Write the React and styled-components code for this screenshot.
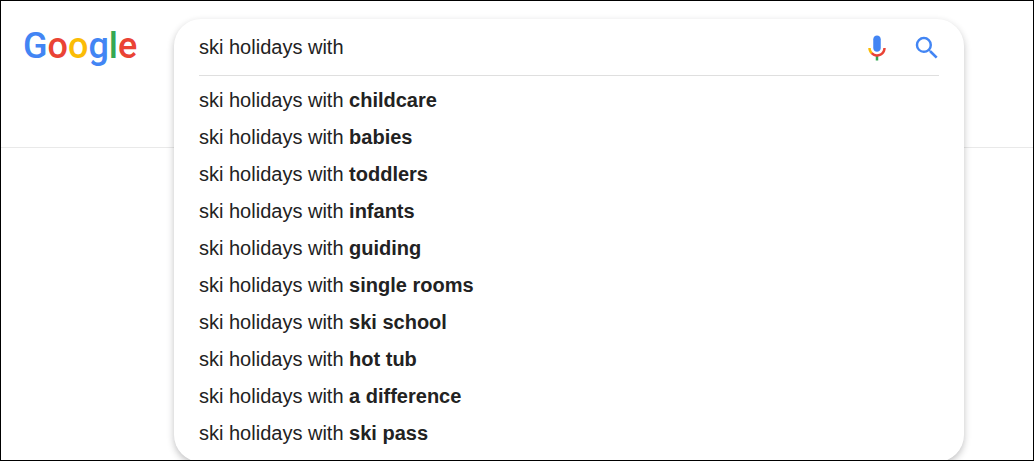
import { useState } from "react"
import styled, { createGlobalStyle } from "styled-components"

const GlobalStyle = createGlobalStyle`
  *, *::before, *::after {
    box-sizing: border-box;
  }

  body {
    margin: 0;
    background: #fff;
    color: #222;
    font-family: "Liberation Sans", Arial, sans-serif;
    font-size: 20px;
  }
`

const Page = styled.div`
  position: relative;
  min-height: 100vh;
  overflow: hidden;
  border: 1px solid #000;
`

const Header = styled.header`
  position: relative;
  height: 147px;
  padding: 23px 22px;
  border-bottom: 1px solid #e9e9e9;
`

const Logo = styled.a`
  display: inline-block;
  font-family: Roboto, sans-serif;
  font-size: 36px;
  font-weight: 500;
  line-height: 44px;
  text-decoration: none;
`

const Letter = styled.span`
  color: ${({ $color }) => $color};
`

// floats over the header line and the results below it
const SearchBox = styled.form`
  position: absolute;
  top: 18px;
  left: 173px;
  right: 69px;
  padding: 0 25px 10px;
  border-radius: 27px;
  background: #fff;
  box-shadow: 0 3px 7px rgba(32, 33, 36, 0.28);
`

const SearchRow = styled.div`
  display: flex;
  align-items: center;
  gap: 20px;
  height: 57px;
  border-bottom: 1px solid #dfdfdf;
`

const SearchInput = styled.input`
  flex: 1;
  min-width: 0;
  padding: 0;
  border: 0;
  outline: 0;
  background: transparent;
  color: #222;
  font: inherit;
`

const IconButton = styled.button`
  display: flex;
  padding: 1px 0 0;
  border: 0;
  background: none;
  cursor: pointer;

  &:last-child {
    margin-right: -3px;
  }

  svg {
    width: 30px;
    height: 30px;
  }
`

const Suggestions = styled.ul`
  margin: 0;
  padding: 6px 0 0;
  list-style: none;
`

const Suggestion = styled.a`
  display: block;
  color: #222;
  line-height: 37px;
  text-decoration: none;
`

const logoLetters = [
  ["G", "#4285f4"],
  ["o", "#ea4335"],
  ["o", "#fbbc05"],
  ["g", "#4285f4"],
  ["l", "#34a853"],
  ["e", "#ea4335"],
]

const prefix = "ski holidays with"

const endings = [
  "childcare",
  "babies",
  "toddlers",
  "infants",
  "guiding",
  "single rooms",
  "ski school",
  "hot tub",
  "a difference",
  "ski pass",
]

function MicIcon() {
  return (
    <svg viewBox="0 0 24 24" aria-hidden="true">
      <path
        fill="#4285f4"
        d="M12 15c1.66 0 3-1.31 3-2.97V5.01C15 3.35 13.66 2 12 2S9 3.34 9 5.01v7.02C9 13.69 10.34 15 12 15z"
      />
      <path fill="#34a853" d="M11 18.08h2V22h-2z" />
      <path fill="#fbbc05" d="M7.05 16.87C5.78 15.54 5 14.04 5 12h2c0 1.45.56 2.42 1.47 3.38v.32l-1.15 1.18z" />
      <path
        fill="#ea4335"
        d="M12 16.93a4.97 5.25 0 0 1-3.54-1.55l-1.41 1.49C8.31 18.21 10.07 19 12 19c3.87 0 6.99-2.92 6.99-7H17c0 2.92-2.24 4.93-5 4.93z"
      />
    </svg>
  )
}

function SearchIcon() {
  return (
    <svg viewBox="0 0 24 24" aria-hidden="true">
      <path
        fill="#4285f4"
        d="M15.5 14h-.79l-.28-.27A6.47 6.47 0 0 0 16 9.5 6.5 6.5 0 1 0 9.5 16c1.61 0 3.09-.59 4.23-1.57l.27.28v.79l5 4.99L20.49 19l-4.99-5zm-6 0C7.01 14 5 11.99 5 9.5S7.01 5 9.5 5 14 7.01 14 9.5 11.99 14 9.5 14z"
      />
    </svg>
  )
}

function App() {
  const [query, setQuery] = useState(prefix)

  return (
    <>
      <GlobalStyle />
      <Page>
        <Header>
          <Logo href="#">
            {logoLetters.map(([letter, color], i) => (
              <Letter key={i} $color={color}>{letter}</Letter>
            ))}
          </Logo>

          <SearchBox role="search" onSubmit={(e) => e.preventDefault()}>
            <SearchRow>
              <SearchInput
                type="text"
                name="q"
                aria-label="Search"
                autoComplete="off"
                value={query}
                onChange={(e) => setQuery(e.target.value)}
              />
              <IconButton type="button" aria-label="Search by voice">
                <MicIcon />
              </IconButton>
              <IconButton type="submit" aria-label="Search">
                <SearchIcon />
              </IconButton>
            </SearchRow>

            <Suggestions>
              {endings.map((ending) => (
                <li key={ending}>
                  <Suggestion href={`#${encodeURIComponent(`${prefix} ${ending}`)}`}>
                    {prefix} <b>{ending}</b>
                  </Suggestion>
                </li>
              ))}
            </Suggestions>
          </SearchBox>
        </Header>
      </Page>
    </>
  )
}

export default App
